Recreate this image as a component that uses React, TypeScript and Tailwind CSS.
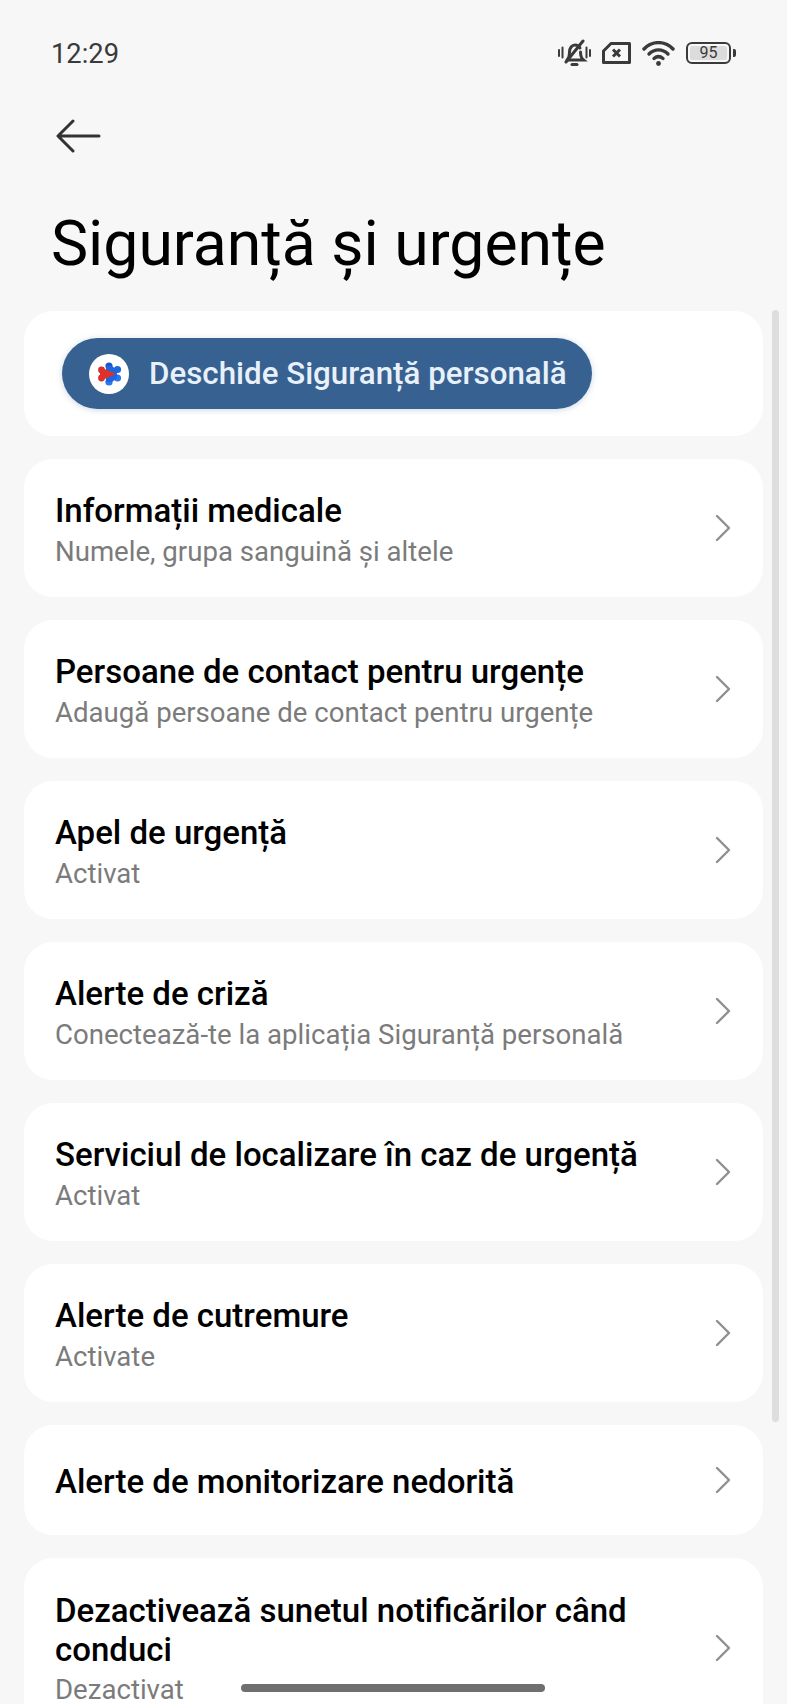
const items = [
  { title: 'Informații medicale', sub: 'Numele, grupa sanguină și altele' },
  { title: 'Persoane de contact pentru urgențe', sub: 'Adaugă persoane de contact pentru urgențe' },
  { title: 'Apel de urgență', sub: 'Activat' },
  { title: 'Alerte de criză', sub: 'Conectează-te la aplicația Siguranță personală' },
  { title: 'Serviciul de localizare în caz de urgență', sub: 'Activat' },
  { title: 'Alerte de cutremure', sub: 'Activate' },
  { title: 'Alerte de monitorizare nedorită' },
];

function Chevron() {
  return (
    <svg width="16" height="28" viewBox="0 0 16 28" fill="none" stroke="#8f8f8f" strokeWidth="2.400" strokeLinecap="round" strokeLinejoin="round" className="shrink-0">
      <path d="M2 2l12 12L2 26" />
    </svg>
  );
}

function StatusIcons() {
  return (
    <div className="flex items-center gap-[11px] text-[#3a3a3a]">
      <svg width="33" height="28" viewBox="0 0 33 28" fill="none" stroke="currentColor" strokeWidth="3" strokeLinecap="round">
        <path d="M1 11v6M4.500 8.500v10M28.500 8.500v10M32 11v6" strokeWidth="2" />
        <path d="M9 21c2-2 2.500-4 2.500-8 0-4 2.500-7 5.500-7 2 0 4 1 5 3M22.500 13c0 4 .5 6 3 8H9" />
        <path d="M14 25.500h5" />
        <path d="M8 23 25 2" />
      </svg>
      <svg width="29" height="22" viewBox="0 0 29 22" fill="none" stroke="currentColor" strokeWidth="3" strokeLinejoin="round">
        <path d="M9 1.500h18.500v19h-26V9Z" />
        <path d="M11 7.500l7 7M18 7.500l-7 7" strokeWidth="3" />
      </svg>
      <svg width="33" height="25" viewBox="0 0 33 25" fill="none" stroke="currentColor" strokeWidth="3.400" strokeLinecap="round">
        <path d="M2 8C10-.5 23-.5 31 8" />
        <path d="M7 13C12.500 7.500 20.500 7.500 26 13" />
        <path d="M12 17.500c3-2.500 6-2.500 9 0" />
        <circle cx="16.500" cy="22.500" r="2.400" fill="currentColor" stroke="none" />
      </svg>
      <div className="flex items-center gap-[2px]">
        <div className="w-[45px] h-[22px] rounded-[6px] border-[2px] border-[#3a3a3a] p-[2px] flex">
          <div className="w-[37px] h-full rounded-[2px] bg-[#dcdcdc] flex items-center justify-center text-[16px] leading-none text-[#3a3a3a]">95</div>
        </div>
        <div className="w-[3px] h-[8px] rounded-r-[2px] bg-[#3a3a3a]" />
      </div>
    </div>
  );
}

function SafetyLogo() {
  return (
    <div className="w-[40px] h-[40px] rounded-full bg-white flex items-center justify-center">
      <svg width="28" height="28" viewBox="0 0 28 28">
        <circle cx="14" cy="6" r="3.600" fill="#1a56c9" />
        <circle cx="22.500" cy="9.500" r="3.600" fill="#1f66de" />
        <circle cx="22.500" cy="18" r="3.600" fill="#2a78ee" />
        <circle cx="14" cy="22" r="3.600" fill="#2a78ee" />
        <path d="M11 6h6l5 4v8l-5 4h-6Z" fill="#1f66de" />
        <circle cx="6.500" cy="10" r="3.400" fill="#d32f2f" />
        <circle cx="6.500" cy="18" r="3.400" fill="#d32f2f" />
        <path d="M5 7 21 14 5 21Z" fill="#e0302a" />
      </svg>
    </div>
  );
}

function Row({ title, sub }: { title: string; sub?: string }) {
  return (
    <div className={`bg-white rounded-[29px] pl-[31px] pr-[32px] flex items-center justify-between ${sub ? 'h-[138px]' : 'h-[110px]'}`}>
      <div className={sub ? 'pt-[6px]' : 'pt-[4px]'}>
        <div className="text-[33px] leading-[40px] font-medium text-black">{title}</div>
        {sub && <div className="text-[27.600px] leading-[38px] mt-[2px] text-[#7b7b7b]">{sub}</div>}
      </div>
      <Chevron />
    </div>
  );
}

export default function App() {
  return (
    <div className="relative w-[787px] h-[1704px] overflow-hidden bg-[#f7f7f7] font-['Roboto',sans-serif]">
      <div className="h-[106px] pl-[51px] pr-[51px] flex items-center justify-between">
        <span className="pt-[2px] text-[27.300px] text-[#3a3a3a]">12:29</span>
        <StatusIcons />
      </div>
      <div className="h-[58px] pl-[56px] pt-[2px] flex items-center">
        <svg width="45" height="34" viewBox="0 0 45 34" fill="none" stroke="#333333" strokeWidth="3" strokeLinecap="round" strokeLinejoin="round">
          <path d="M43 17H3M17 2 2 17l15 15" />
        </svg>
      </div>
      <h1 className="pl-[51px] mt-[42px] text-[62.500px] leading-[76px] text-black">Siguranță și urgențe</h1>
      <div className="mt-[29px] pl-[24px] pr-[24px] flex flex-col gap-[23px]">
        <div className="bg-white rounded-[29px] h-[125px] pl-[38px] flex items-center">
          <div className="h-[71px] w-[530px] rounded-full bg-[#376190] pl-[27px] flex items-center gap-[20px] shadow-[0_1px_6px_rgba(55,97,144,0.25)]">
            <SafetyLogo />
            <span className="pt-[2px] text-[31.300px] font-medium text-[#e8f0fa]">Deschide Siguranță personală</span>
          </div>
        </div>
        {items.map((item, index) => (
          <Row key={index} title={item.title} sub={item.sub} />
        ))}
        <div className="bg-white rounded-[29px] h-[190px] pl-[31px] pr-[32px] pt-[33px] flex items-start justify-between">
          <div>
            <div className="text-[33px] leading-[39px] font-medium text-black">Dezactivează sunetul notificărilor când<br />conduci</div>
            <div className="text-[27.600px] leading-[38px] mt-[2px] text-[#7b7b7b]">Dezactivat</div>
          </div>
          <div className="mt-[43px]"><Chevron /></div>
        </div>
      </div>
      <div className="absolute left-[772px] top-[310px] w-[7px] h-[1112px] rounded-full bg-[#dedede]" />
      <div className="absolute left-[241px] top-[1684px] w-[304px] h-[8px] rounded-full bg-[#6f6f6f]" />
    </div>
  );
}
